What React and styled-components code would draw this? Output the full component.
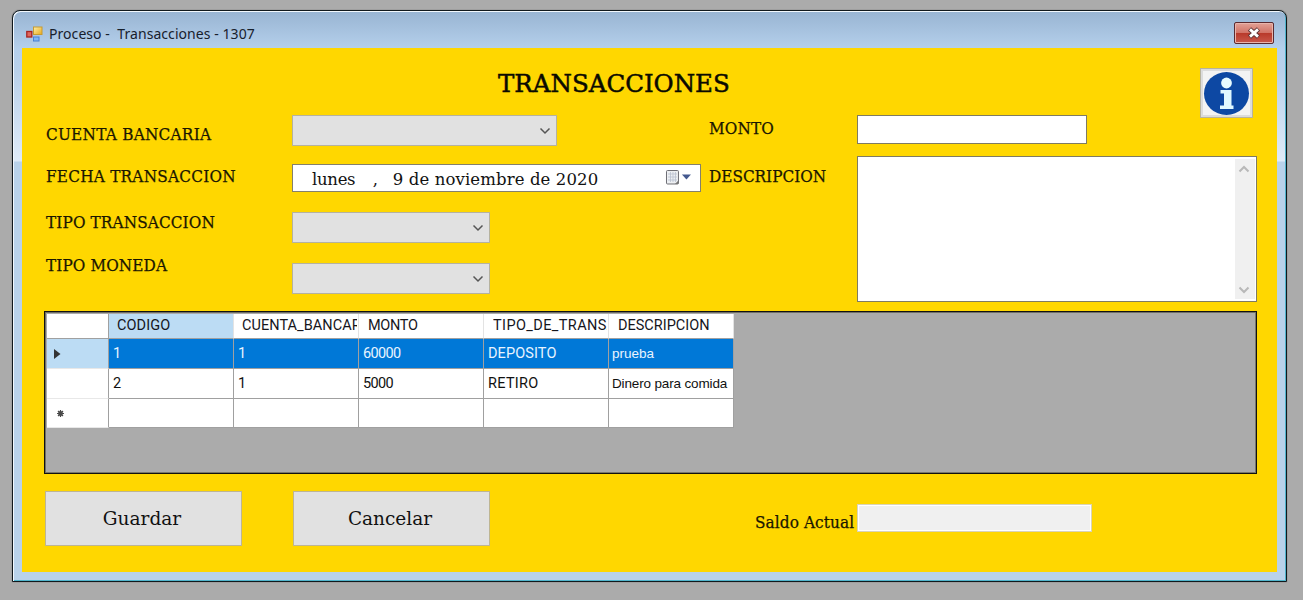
import React from "react";
import styled, { createGlobalStyle, css } from "styled-components";

const Global = createGlobalStyle`
  * { box-sizing: border-box; }
  body { margin: 0; background: #ababab; overflow: hidden; }
`;
const slab = css`font-family: "DejaVu Serif Condensed", "DejaVu Serif", serif; font-stretch: condensed;`;
const wideSlab = css`font-family: "DejaVu Serif", serif;`;
const Desktop = styled.div`
  height: 600px; padding: 10px 16px 18px 12px; background: #ababab;
`;
const Frame = styled.div`
  height: 572px; display: flex; flex-direction: column;
  border: 1px solid #10181c; border-radius: 8px 8px 0 0;
  box-shadow: inset 1px 1px 0 #f2f8fd, inset -1px -1px 0 #4fb4cc, 0 0 1px #333;
  background: linear-gradient(#98b4d2 0, #b5d0ec 38px, #b9d1ea 60px, #dfebf8 150px, #b9d2ea 151px);
  padding: 0 9px;
  padding-bottom: 9px;
`;
const TitleBar = styled.div`
  height: 37px; flex: none; display: flex; align-items: center; padding: 9px 3px 0 4px;
`;
const Caption = styled.span`
  font: 14px/20px "Noto Sans", sans-serif; color: #17202c; margin-left: 6px; flex: 1; white-space: pre;
  letter-spacing: 0.06px;
`;
const CloseButton = styled.div`
  width: 40px; height: 22px; border: 1px solid #5b2a2f; border-radius: 2px; margin-top: -2px;
  background: linear-gradient(#e2a196, #d27467 48%, #b93a2b 52%, #c9584a);
  box-shadow: inset 0 0 0 1px #e9b5ac; display: grid; place-items: center;
`;
const Form = styled.div`flex: 1; background: #ffd700; padding-left: 22px;`;
const Head = styled.div`height: 67px; display: flex; align-items: flex-start;`;
const Title = styled.h1`
  ${wideSlab} margin: 20px 0 0 454px; width: 702px; font-size: 24.5px; line-height: 32px; font-weight: 400; color: #0b0a00;
  -webkit-text-stroke: 0.5px #0b0a00;
`;
const InfoButton = styled.div`
  width: 53px; height: 50px; margin-top: 20px; border: 1px solid #b8b39c; background: #f3f3f3;
  box-shadow: inset 0 0 0 2px #dcdcdc; display: grid; place-items: center;
`;
const Fields = styled.div`display: flex; height: 196px;`;
const Column = styled.div`width: ${p => p.$w}px;`;
const Field = styled.div`display: flex; height: ${p => p.$h}px; align-items: flex-start;`;
const Label = styled.label`
  ${slab} width: ${p => p.$w}px; padding-left: ${p => p.$pl ?? 2}px; margin-top: ${p => p.$mt}px; flex: none;
  font-size: 17px; line-height: 20px; color: #1a1600; white-space: nowrap; letter-spacing: ${p => p.$ls || 0}px;
  -webkit-text-stroke: 0.25px #1a1600;
`;
const Combo = styled.div`
  width: ${p => p.$w}px; height: 31px; background: #e1e1e1; border: 1px solid #b5b29f;
  display: flex; align-items: center; justify-content: flex-end; padding-right: 5px;
`;
const DateBox = styled.div`
  ${wideSlab} width: 409px; height: 28px; background: #fff; border: 1px solid #84806c; display: flex; align-items: center;
  font-size: 16.5px; color: #111; padding: 2px 8px 0 19px; white-space: pre;
`;
const DatePart = styled.span`width: ${p => p.$w}px; letter-spacing: ${p => p.$ls || 0}px;`;
const Input = styled.div`
  width: ${p => p.$w}px; height: ${p => p.$h}px; background: ${p => p.$ro ? "#f0f0f0" : "#fff"};
  border: 1px solid ${p => p.$ro ? "#d9d3b8" : "#7f7b62"}; ${p => p.$ro && "box-shadow: inset 0 0 0 1px #fff;"}
  display: flex; justify-content: flex-end; padding: 2px 1px;
`;
const ScrollBar = styled.div`
  width: 20px; background: #f0f0f0; display: flex; flex-direction: column; justify-content: space-between;
  align-items: center; padding: 6px 3px 5px 0;
`;
const DataGrid = styled.div`
  width: 1213px; height: 163px; background: #ababab; border: 1px solid #111;
  box-shadow: inset 1px 1px 0 #6f6f66, inset -1px -1px 0 #77776c; padding: 2px 0 0 2px;
`;
const Row = styled.div`
  display: grid; grid-template-columns: 62px repeat(5, 125px); width: 687px; height: ${p => p.$h}px;
`;
const HeadCell = styled.div`
  background: ${p => p.$on ? "#bcdcf4" : "#fff"}; border-right: 1px solid ${p => p.$dark ? "#a0a0a0" : "#e3e3e3"}; border-bottom: 1px solid #a0a0a0;
  padding-left: ${p => p.$pl || 8}px; color: #15151c;
  font: 14.5px/24px Roboto, sans-serif; letter-spacing: ${p => p.$ls || 0}px;
`;
const Clip = styled.div`overflow: hidden; white-space: nowrap; margin-right: 1px;`;
const RowHead = styled.div`
  background: ${p => p.$on ? "#bcdcf4" : "#fff"}; border-right: 1px solid #a0a0a0; border-bottom: 1px solid #e8e8e8;
  display: flex; align-items: center; padding-left: ${p => p.$pl || 7}px;
`;
const Cell = styled.div`
  background: ${p => p.$on ? "#0078d7" : "#fff"}; color: ${p => p.$on ? "#e8f4ff" : "#111"};
  border-right: 1px solid #a0a0a0; border-bottom: 1px solid #a0a0a0; padding-left: ${p => p.$arial ? 3 : 4}px;
  overflow: hidden; white-space: nowrap; letter-spacing: ${p => p.$ls || 0}px;
  font: ${p => p.$arial ? '13.5px/29px "Liberation Sans"' : "14.5px/30px Roboto"}, sans-serif;
`;
const Footer = styled.div`display: flex; padding: 18px 0 0 1px; margin-top: -1px;`;
const Button = styled.div`
  ${wideSlab} width: 197px; height: 55px; margin-right: ${p => p.$mr}px; background: #e1e1e1; border: 1px solid #bdb593;
  display: grid; place-items: center; font-size: 18.5px; color: #111; padding: 0 3px 1px 0;
`;
const Balance = styled.div`display: flex; padding-top: 13px;`;

const Chevron = ({ up, color = "#555" }) => (
  <svg width="12" height="8" viewBox="0 0 12 8"><path d={up ? "M1.5 6.5L6 2L10.5 6.5" : "M1.5 1.5L6 6L10.5 1.5"} fill="none" stroke={color} strokeWidth={color === "#555" ? 1.5 : 2} /></svg>
);
const AppIcon = () => (
  <svg width="17" height="17" viewBox="0 0 17 17">
    <defs><linearGradient id="gold" x2="1" y2="1"><stop stopColor="#fff0a8" /><stop offset="1" stopColor="#e9a818" /></linearGradient></defs>
    <rect x="7.5" y="1" width="8.500" height="7.500" fill="url(#gold)" stroke="#c69a30" />
    <rect x=".8" y="5.500" width="5" height="5.500" fill="#e0665c" stroke="#a82420" strokeWidth="1.300" />
    <rect x="7.500" y="11" width="5.500" height="4" fill="#7db4f4" stroke="#4a80d4" />
  </svg>
);
const CalendarIcon = () => (
  <svg width="27" height="18" viewBox="0 0 27 18">
    <rect x="1.500" y=".5" width="12" height="13.500" rx="1" fill="#eef0f3" stroke="#6d6d74" />
    <path d="M3 4H12M3 7H12M3 10H12M5.500 2V12M8 2V12M10.500 2V12" stroke="#b9c0ce" strokeWidth=".8" />
    <path d="M10 14L13.500 10.500V14Z" fill="#777" /><path d="M17 4.500H26L21.500 9.500Z" fill="#44598f" />
  </svg>
);
const InfoIcon = () => (
  <svg width="47" height="45" viewBox="0 0 47 45">
    <ellipse cx="23.500" cy="22.500" rx="22.500" ry="21.500" fill="#0d48a3" />
    <circle cx="23.500" cy="12" r="5.400" fill="#e8fbff" />
    <path d="M17.500 19H28.500V34.500H30.500V38H17V34.500H21V22.500H17.500Z" fill="#e0f8ff" />
  </svg>
);
const CloseIcon = () => (
  <svg width="14" height="12" viewBox="0 0 14 12">
    <path d="M2.500 2L11.500 10M11.500 2L2.500 10" stroke="#5d3436" strokeWidth="4.800" /><path d="M3 2.400L11 9.600M11 2.400L3 9.600" stroke="#fff" strokeWidth="2.800" />
  </svg>
);
const NewRowIcon = () => (
  <svg width="9" height="9" viewBox="0 0 9 9">
    <circle cx="4.500" cy="4.500" r="2.400" fill="#555" /><path d="M4.500 1V8M1 4.500H8M2 2L7 7M7 2L2 7" stroke="#4a4a4a" strokeWidth="1.200" />
  </svg>
);

export default function App() {
  return (
    <Desktop><Global /><Frame>
      <TitleBar>
        <AppIcon />
        <Caption>{"Proceso -  Transacciones - 1307"}</Caption>
        <CloseButton><CloseIcon /></CloseButton>
      </TitleBar>
      <Form>
        <Head><Title>TRANSACCIONES</Title><InfoButton><InfoIcon /></InfoButton></Head>
        <Fields>
          <Column $w={665}>
            <Field $h={49}><Label $w={248} $mt={9} $ls={0.26}>CUENTA BANCARIA</Label><Combo $w={265}><Chevron /></Combo></Field>
            <Field $h={48}><Label $w={248} $mt={2} $ls={0.24}>FECHA TRANSACCION</Label>
              <DateBox><DatePart $w={61} $ls={-0.3}>lunes</DatePart><DatePart $w={20}>,</DatePart><DatePart $w={273} $ls={0.12}>9 de noviembre de 2020</DatePart><CalendarIcon /></DateBox>
            </Field>
            <Field $h={51}><Label $w={248} $mt={0} $ls={0.12}>TIPO TRANSACCION</Label><Combo $w={198}><Chevron /></Combo></Field>
            <Field $h={31}><Label $w={248} $mt={-8} $ls={0.1}>TIPO MONEDA</Label><Combo $w={198}><Chevron /></Combo></Field>
          </Column>
          <Column $w={548}>
            <Field $h={41}><Label $w={148} $mt={3} $pl={0} $ls={0.1}>MONTO</Label><Input $w={230} $h={29} /></Field>
            <Field $h={146}><Label $w={148} $mt={10} $pl={0}>DESCRIPCION</Label><Input $w={400} $h={146}><ScrollBar><Chevron up color="#b8b8b8" /><Chevron color="#b8b8b8" /></ScrollBar></Input></Field>
          </Column>
        </Fields>
        <DataGrid>
          <Row $h={25}>
            <HeadCell $dark />
            <HeadCell $on $ls={0.1}>CODIGO</HeadCell>
            <HeadCell $ls={0.05}><Clip>CUENTA_BANCARIA</Clip></HeadCell>
            <HeadCell $pl={9} $ls={-0.3}>MONTO</HeadCell>
            <HeadCell $pl={9} $ls={0.4}><Clip>TIPO_DE_TRANSACCION</Clip></HeadCell>
            <HeadCell $pl={9}>DESCRIPCION</HeadCell>
          </Row>
          <Row $h={30}><RowHead $on><svg width="8" height="12"><path d="M0 1L6.500 6L0 11Z" fill="#333" /></svg></RowHead><Cell $on>1</Cell><Cell $on>1</Cell><Cell $on $ls={-0.65}>60000</Cell><Cell $on $ls={0.1}>DEPOSITO</Cell><Cell $on $arial>prueba</Cell></Row>
          <Row $h={30}><RowHead /><Cell>2</Cell><Cell>1</Cell><Cell $ls={-0.65}>5000</Cell><Cell $ls={0.3}>RETIRO</Cell><Cell $arial $ls={-0.15}>Dinero para comida</Cell></Row>
          <Row $h={29}>
            <RowHead $pl={9}><NewRowIcon /></RowHead>
            <Cell /><Cell /><Cell /><Cell /><Cell />
          </Row>
        </DataGrid>
        <Footer>
          <Button $mr={51}>Guardar</Button><Button $mr={265}>Cancelar</Button>
          <Balance><Label $w={102} $mt={8} $pl={0} $ls={0.1}>Saldo Actual</Label><Input $ro $w={235} $h={28} /></Balance>
        </Footer>
      </Form>
    </Frame></Desktop>
  );
}
